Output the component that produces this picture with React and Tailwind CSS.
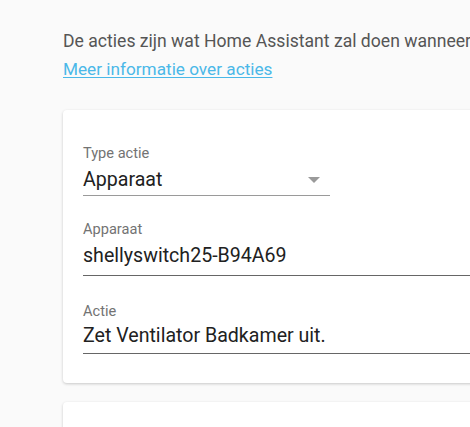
export default function App() {
  return (
    <div className="h-[427px] w-[470px] overflow-hidden bg-[#fafafa] font-['Roboto',sans-serif]">
      <div className="pl-[63px] pt-[29px]">
        <p className="text-[17.6px] leading-[24px] text-[#555] whitespace-nowrap">
          De acties zijn wat Home Assistant zal doen wanneer de automatisering wordt geactiveerd.
        </p>
        <a href="#" className="mt-[4px] block text-[17.2px] leading-[24px] text-[#4ab8e8] underline underline-offset-2">
          Meer informatie over acties
        </a>

        <div className="mt-[29px] w-[460px] rounded-[4px] bg-white pl-[20px] pr-[20px] pt-[33px] pb-[29px] shadow-[0_1px_3px_rgba(0,0,0,0.2)]">
          <div className="w-[247px] border-b border-[#9a9a9a]">
            <div className="text-[14.6px] leading-[20px] text-[#737373]">Type actie</div>
            <div className="mt-[3px] flex items-center justify-between pb-[1px]">
              <span className="text-[19.6px] leading-[28px] text-[#212121]">Apparaat</span>
              <span className="mr-[10px] h-0 w-0 border-x-[6px] border-t-[6px] border-x-transparent border-t-[#9a9a9a]" />
            </div>
          </div>

          <div className="mt-[23px] border-b border-[#666]">
            <div className="text-[14.6px] leading-[20px] text-[#737373]">Apparaat</div>
            <div className="mt-[3px] pb-[5px] text-[19.6px] leading-[28px] text-[#212121]">shellyswitch25-B94A69</div>
          </div>

          <div className="mt-[25px] border-b border-[#666]">
            <div className="text-[14.6px] leading-[20px] text-[#737373]">Actie</div>
            <div className="mt-[1px] pb-[3px] text-[19.6px] leading-[28px] text-[#212121]">Zet Ventilator Badkamer uit.</div>
          </div>
        </div>

        <div className="mt-[19px] h-[60px] w-[460px] rounded-[4px] bg-white shadow-[0_1px_3px_rgba(0,0,0,0.2)]" />
      </div>
    </div>
  );
}
